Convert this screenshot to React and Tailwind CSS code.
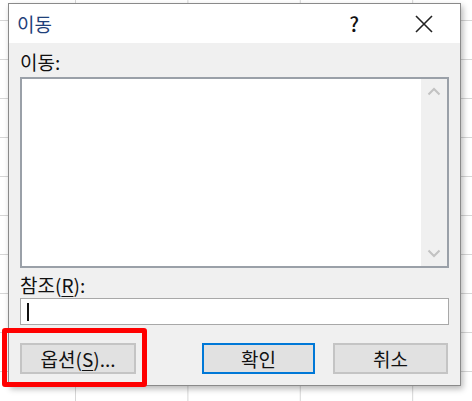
export default function App() {
  const font = "font-['Noto_Sans_CJK_KR','Noto_Sans',sans-serif]";

  return (
    <div
      className={`relative w-[472px] h-[401px] overflow-hidden bg-white bg-[linear-gradient(to_right,#d6d6d6_1px,transparent_1px),linear-gradient(to_bottom,#d6d6d6_1px,transparent_1px)] bg-[size:112.4px_39px] bg-[position:75px_20px] ${font}`}
    >
      {/* 대화 상자 */}
      <div className="ml-[8px] mt-[3px] w-[453px] h-[383px] border border-[#8a8a8a] bg-[#f0f0f0] shadow-[2px_3px_6px_rgba(0,0,0,0.28)] flex flex-col">
        {/* 제목 표시줄 */}
        <div className="h-[39px] bg-white flex items-center pl-[8px]">
          <span className="text-[19px] leading-none text-[#1f417a]">이동</span>
          <span className="ml-auto mr-[56px] text-[20px] leading-none font-medium text-[#111]">?</span>
          <svg className="mr-[27px]" width="18" height="18" viewBox="0 0 18 18">
            <path d="M1 1 L17 17 M17 1 L1 17" stroke="#222" strokeWidth="1.6" fill="none" />
          </svg>
        </div>

        <div className="flex flex-col px-[11px]">
          <div className="mt-[7px] h-[24px] text-[19px] leading-[24px] text-[#111]">이동:</div>

          {/* 목록 */}
          <div className="mt-[3px] h-[191px] border-2 border-[#9aa0a8] bg-white flex justify-end">
            <div className="w-[26px] bg-[#f0f0f0] flex flex-col items-center justify-between py-[8px]">
              <svg width="14" height="9" viewBox="0 0 14 9">
                <path d="M1.5 7.5 L7 2 L12.5 7.5" stroke="#c2c2c2" strokeWidth="2" fill="none" />
              </svg>
              <svg width="14" height="9" viewBox="0 0 14 9">
                <path d="M1.5 1.5 L7 7 L12.5 1.5" stroke="#c2c2c2" strokeWidth="2" fill="none" />
              </svg>
            </div>
          </div>

          <div className="mt-[5px] h-[24px] text-[19px] leading-[24px] text-[#111]">
            참조(<span className="underline underline-offset-[3px]">R</span>):
          </div>

          {/* 참조 입력 */}
          <div className="mt-[1px] h-[27px] border border-[#a8a8a8] bg-white flex items-center pl-[6px]">
            <div className="w-[2px] h-[18px] bg-[#111]" />
          </div>

          {/* 버튼 */}
          <div className="mt-[18px] flex items-center">
            <button className="w-[116px] h-[31px] border-2 border-[#c4c4c4] bg-[#e1e1e1] text-[19px] leading-none text-[#111]">
              옵션(<span className="underline underline-offset-[3px]">S</span>)...
            </button>
            <button className="ml-auto w-[113px] h-[31px] border-2 border-[#0078d7] bg-[#e1e1e1] text-[19px] leading-none text-[#111]">
              확인
            </button>
            <button className="ml-[18px] mr-[1px] w-[115px] h-[31px] border-2 border-[#c4c4c4] bg-[#e1e1e1] text-[19px] leading-none text-[#111]">
              취소
            </button>
          </div>
        </div>
      </div>

      {/* 강조 표시 */}
      <div className="absolute left-[2px] top-[328px] w-[145px] h-[59px] border-[5px] border-[#ff0000] rounded-[3px]" />
    </div>
  );
}
